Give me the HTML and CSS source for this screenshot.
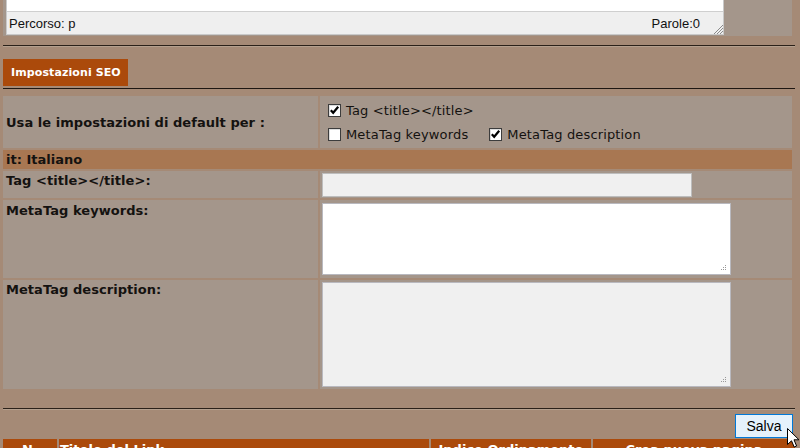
FILE: index.html
```html
<!DOCTYPE html>
<html lang="it">
<head>
    <meta charset="UTF-8">
    <title>Impostazioni SEO</title>
    <link rel="stylesheet" href="styles.css">
</head>
<body>
    <div class="page">
        <div class="editor-cell">
            <div class="editor">
                <div class="editor-body"></div>
                <div class="statusbar">
                    <span>Percorso: p</span>
                    <span>Parole:0</span>
                    <svg class="grip" width="11" height="9" viewBox="0 0 11 9">
                        <path d="M2 9 L11 0 M5 9 L11 3 M8 9 L11 6" stroke="#8a8a8a" stroke-width="1"/>
                    </svg>
                </div>
            </div>
        </div>

        <hr class="rule">

        <div class="tab">Impostazioni SEO</div>
        <div class="tab-line"></div>

        <div class="seo-grid">
            <div class="cell label middle">Usa le impostazioni di default per :</div>
            <div class="cell options">
                <div class="opt-line">
                    <input type="checkbox" class="cb" checked>
                    <span>Tag &lt;title&gt;&lt;/title&gt;</span>
                </div>
                <div class="opt-line">
                    <input type="checkbox" class="cb">
                    <span class="opt-gap">MetaTag keywords</span>
                    <input type="checkbox" class="cb" checked>
                    <span>MetaTag description</span>
                </div>
            </div>

            <div class="lang">it: Italiano</div>

            <div class="cell label row-title">Tag &lt;title&gt;&lt;/title&gt;:</div>
            <div class="cell row-title">
                <input type="text" class="field-title">
            </div>

            <div class="cell label row-keys">MetaTag keywords:</div>
            <div class="cell row-keys">
                <textarea class="area area-keys"></textarea>
            </div>

            <div class="cell label row-desc">MetaTag description:</div>
            <div class="cell row-desc">
                <textarea class="area area-desc"></textarea>
            </div>
        </div>

        <hr class="rule rule-bottom">

        <div class="actions">
            <button type="button" class="btn-save">Salva</button>
        </div>

        <div class="links-head">
            <div>N.</div>
            <div class="left">Titolo del Link</div>
            <div>Indice Ordinamento</div>
            <div>Crea nuova pagina</div>
        </div>

        <svg class="cursor" width="13" height="21" viewBox="0 0 13 21">
            <path d="M0.5 0.5 L0.5 16.5 L4.5 12.8 L7.2 19 L9.6 18 L7 11.8 L12 11.8 Z" fill="#fff" stroke="#000" stroke-width="1"/>
        </svg>
    </div>
</body>
</html>
```

FILE: styles.css
```css
* {
    box-sizing: border-box;
}
body {
    margin: 0;
    background-color: #a58a76;
    font-family: "DejaVu Sans", Verdana, sans-serif;
    font-size: 13px;
    color: #141210;
}
.page {
    position: relative;
    height: 448px;
    overflow: hidden;
    padding: 0 5px 0 3px;
}
.editor-cell {
    background: #a4968b;
    padding: 0 0 1px 3px;
    margin-right: 3px;
}
.editor {
    width: 718px;
    border: 1px solid #c9c9c9;
    border-top: none;
    background: #ffffff;
}
.editor-body {
    height: 11px;
}
.statusbar {
    position: relative;
    display: flex;
    justify-content: space-between;
    align-items: center;
    height: 23px;
    padding: 0 23px 0 2px;
    background: #efefef;
    border-top: 1px solid #cfcfcf;
    font-family: "Liberation Sans", Arial, sans-serif;
    font-size: 13px;
    color: #111;
}
.grip {
    position: absolute;
    right: 0;
    bottom: 0;
}
.rule {
    height: 2px;
    margin: 9px 0 0;
    border: 0;
    border-top: 1px solid #2b2119;
    border-bottom: 1px solid #b4a08e;
}
.tab {
    width: 125px;
    height: 27px;
    margin-top: 12px;
    padding-left: 8px;
    line-height: 27px;
    background: #ab4a0b;
    color: #ffffff;
    font-size: 11px;
    font-weight: bold;
    letter-spacing: 0.1px;
}
.tab-line {
    margin-top: 2px;
    border-top: 1px solid #1e1712;
}
.seo-grid {
    display: grid;
    grid-template-columns: 315px 1fr;
    gap: 2px;
    margin: 7px 3px 0 0;
}
.cell {
    background: #a4968b;
}
.label {
    font-weight: bold;
    padding: 2px 3px 0;
    letter-spacing: 0.05px;
}
.middle {
    display: flex;
    align-items: center;
    height: 52px;
    padding-top: 0;
}
.options {
    padding: 2px 0 2px 8px;
    letter-spacing: 0.15px;
}
.opt-line {
    display: flex;
    align-items: center;
    height: 24px;
}
.opt-gap {
    margin-right: 21px;
}
.cb {
    appearance: none;
    -webkit-appearance: none;
    flex: none;
    width: 13px;
    height: 13px;
    margin: 0 5px 0 0;
    border: 1px solid #3c3c3c;
    background: #ffffff;
    box-shadow: inset 1px 1px 0 #dcdcdc;
}
.cb:checked {
    background: #ffffff url("data:image/svg+xml,%3Csvg xmlns='http://www.w3.org/2000/svg' width='11' height='11' viewBox='0 0 11 11'%3E%3Cpath d='M1.8 5.2 L4.2 7.8 L9.2 1.8' fill='none' stroke='%23000' stroke-width='2.2'/%3E%3C/svg%3E") center / 11px 11px no-repeat;
}
.lang {
    grid-column: 1 / -1;
    height: 19px;
    line-height: 19px;
    padding-left: 3px;
    background: #a87752;
    font-weight: bold;
}
.row-title {
    height: 27px;
}
.row-keys {
    height: 78px;
}
.row-desc {
    height: 109px;
}
.label.row-keys {
    padding-top: 3px;
}
.field-title {
    display: block;
    width: 370px;
    height: 24px;
    margin: 2px 0 0 2px;
    border: 1px solid #bdbdbd;
    background: #f0f0f0;
}
.area {
    display: block;
    width: 409px;
    margin: 0 0 0 2px;
    border: 1px solid #b9b9bf;
    resize: none;
    background-image: url("data:image/svg+xml,%3Csvg xmlns='http://www.w3.org/2000/svg' width='7' height='7' viewBox='0 0 7 7'%3E%3Cg fill='%23999'%3E%3Crect x='5' y='0' width='1' height='1'/%3E%3Crect x='3' y='2' width='1' height='1'/%3E%3Crect x='5' y='2' width='1' height='1'/%3E%3Crect x='1' y='4' width='1' height='1'/%3E%3Crect x='3' y='4' width='1' height='1'/%3E%3Crect x='5' y='4' width='1' height='1'/%3E%3C/g%3E%3C/svg%3E");
    background-repeat: no-repeat;
    background-position: right 3px bottom 2px;
}
.area-keys {
    height: 72px;
    margin-top: 3px;
    background-color: #ffffff;
}
.area-desc {
    height: 105px;
    margin-top: 2px;
    background-color: #f0f0f0;
}
.rule-bottom {
    margin-top: 19px;
}
.actions {
    display: flex;
    justify-content: flex-end;
    margin: 4px 2px 0 0;
}
.btn-save {
    width: 58px;
    height: 24px;
    padding: 0;
    border: 1px solid #0078d7;
    background: #e5f1fb;
    font-family: "Liberation Sans", Arial, sans-serif;
    font-size: 14px;
    color: #000;
}
.links-head {
    display: grid;
    grid-template-columns: 54px 370px 160px 1fr;
    gap: 2px;
    margin-top: 1px;
}
.links-head div {
    height: 24px;
    padding-top: 3px;
    background: #ab4a0b;
    color: #ffffff;
    font-weight: bold;
    text-align: center;
}
.links-head .left {
    text-align: left;
    padding-left: 1px;
}
.cursor {
    position: absolute;
    left: 787px;
    top: 428px;
}
```
